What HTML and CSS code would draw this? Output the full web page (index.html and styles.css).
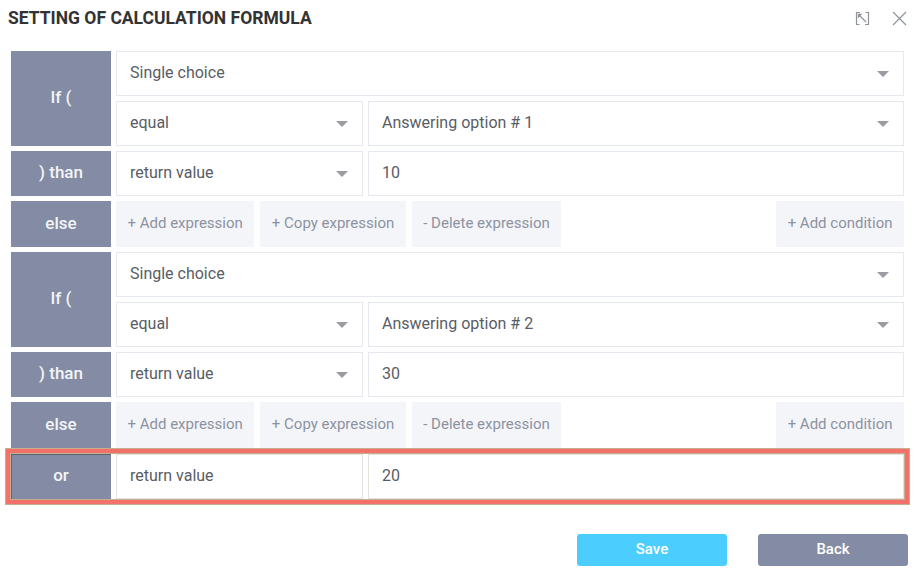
FILE: index.html
```html
<!DOCTYPE html>
<html>
<head>
<meta charset="utf-8">
<link rel="stylesheet" href="styles.css">
</head>
<body>
<div class="dialog">
  <div class="header">
    <div class="title">SETTING OF CALCULATION FORMULA</div>
    <div class="tools">
      <svg class="icon" width="15" height="15" viewBox="0 0 15 15">
        <path d="M5 1.5H1.5V13.5H4.5M10 13.5H13.5V1.5H10.5" fill="none" stroke="#8e939c" stroke-width="1.2"/>
        <path d="M11 11L3.5 3.5" fill="none" stroke="#8e939c" stroke-width="1.2"/>
        <path d="M2.8 2.8H7.5L2.8 7.5Z" fill="#8e939c"/>
      </svg>
      <svg class="icon" width="15" height="15" viewBox="0 0 15 15">
        <path d="M1 1L14 14M14 1L1 14" fill="none" stroke="#8e939c" stroke-width="1.2"/>
      </svg>
    </div>
  </div>

  <div class="formula">
    <div class="row">
      <div class="label">If (</div>
      <div class="fields">
        <div class="line"><div class="select grow"><span>Single choice</span><i class="arrow"></i></div></div>
        <div class="line">
          <div class="select half"><span>equal</span><i class="arrow"></i></div>
          <div class="select grow"><span>Answering option # 1</span><i class="arrow"></i></div>
        </div>
      </div>
    </div>
    <div class="row">
      <div class="label">) than</div>
      <div class="line">
        <div class="select half"><span>return value</span><i class="arrow"></i></div>
        <div class="select grow"><span>10</span></div>
      </div>
    </div>
    <div class="row">
      <div class="label tall">else</div>
      <div class="actions">
        <div class="btn">+ Add expression</div>
        <div class="btn">+ Copy expression</div>
        <div class="btn">- Delete expression</div>
        <div class="btn push">+ Add condition</div>
      </div>
    </div>

    <div class="row">
      <div class="label">If (</div>
      <div class="fields">
        <div class="line"><div class="select grow"><span>Single choice</span><i class="arrow"></i></div></div>
        <div class="line">
          <div class="select half"><span>equal</span><i class="arrow"></i></div>
          <div class="select grow"><span>Answering option # 2</span><i class="arrow"></i></div>
        </div>
      </div>
    </div>
    <div class="row">
      <div class="label">) than</div>
      <div class="line">
        <div class="select half"><span>return value</span><i class="arrow"></i></div>
        <div class="select grow"><span>30</span></div>
      </div>
    </div>
    <div class="row">
      <div class="label tall">else</div>
      <div class="actions">
        <div class="btn">+ Add expression</div>
        <div class="btn">+ Copy expression</div>
        <div class="btn">- Delete expression</div>
        <div class="btn push">+ Add condition</div>
      </div>
    </div>

    <div class="row or-row">
      <div class="label">or</div>
      <div class="line">
        <div class="select half"><span>return value</span></div>
        <div class="select grow"><span>20</span></div>
      </div>
    </div>
  </div>

  <div class="footer">
    <div class="fbtn save">Save</div>
    <div class="fbtn back">Back</div>
  </div>
</div>
</body>
</html>
```
FILE: styles.css
```css
* { box-sizing: border-box; }
html, body { margin: 0; padding: 0; background: #fff; }
body {
  width: 914px;
  height: 571px;
  overflow: hidden;
  font-family: Roboto, "Liberation Sans", sans-serif;
}
.header {
  height: 36px;
  display: flex;
  align-items: center;
  justify-content: space-between;
  padding: 0 7px 0 8px;
}
.title {
  font-size: 17.5px;
  font-weight: 700;
  color: #333;
}
.tools { display: flex; gap: 22px; align-items: center; }
.icon { display: block; }

.formula {
  margin-top: 15px;
  padding: 0 10px 0 11px;
  display: flex;
  flex-direction: column;
  gap: 5px;
}
.row { display: flex; gap: 5px; }
.label {
  width: 100px;
  flex: none;
  background: #838ca4;
  color: #f3f4f7;
  font-size: 17px;
  font-weight: 500;
  display: flex;
  align-items: center;
  justify-content: center;
  padding-bottom: 3px;
}
.fields { flex: 1; display: flex; flex-direction: column; gap: 5px; }
.line { flex: 1; display: flex; gap: 5px; }
.select {
  height: 45px;
  border: 1px solid #e5e8ee;
  background: #fff;
  padding: 0 14px 3px 13px;
  display: flex;
  align-items: center;
  justify-content: space-between;
  font-size: 16px;
  color: #595d65;
}
.select .arrow { margin-top: 3px; }
.half { width: 247px; flex: none; }
.grow { flex: 1; }
.arrow {
  width: 0; height: 0;
  border-left: 6px solid transparent;
  border-right: 6px solid transparent;
  border-top: 6px solid #9a9ca2;
}
.actions { flex: 1; display: flex; gap: 6px; }
.btn {
  height: 46px;
  background: #f4f5f9;
  color: #8d92a1;
  font-size: 15px;
  padding: 0 11.5px 3px;
  display: flex;
  align-items: center;
}
.push { margin-left: auto; }

.or-row {
  margin-top: 1px;
  box-shadow: 0 0 0 1px #c7ae8e, 0 0 0 5px #f2716b, 0 0 0 6px #c7ae8e;
}
.or-row .select { border-color: #e3e2dc; }
.or-row .label { box-shadow: inset 1px 1px 0 #5f6678; }

.footer {
  margin-top: 35px;
  display: flex;
  justify-content: flex-end;
  gap: 31px;
  padding-right: 6px;
}
.fbtn {
  width: 150px;
  height: 32px;
  border-radius: 3px;
  display: flex;
  align-items: center;
  justify-content: center;
  color: #fff;
  font-size: 15px;
  font-weight: 500;
  padding-bottom: 3px;
}
.save { background: #4bcdfe; }
.back { background: #838ca4; }
```
